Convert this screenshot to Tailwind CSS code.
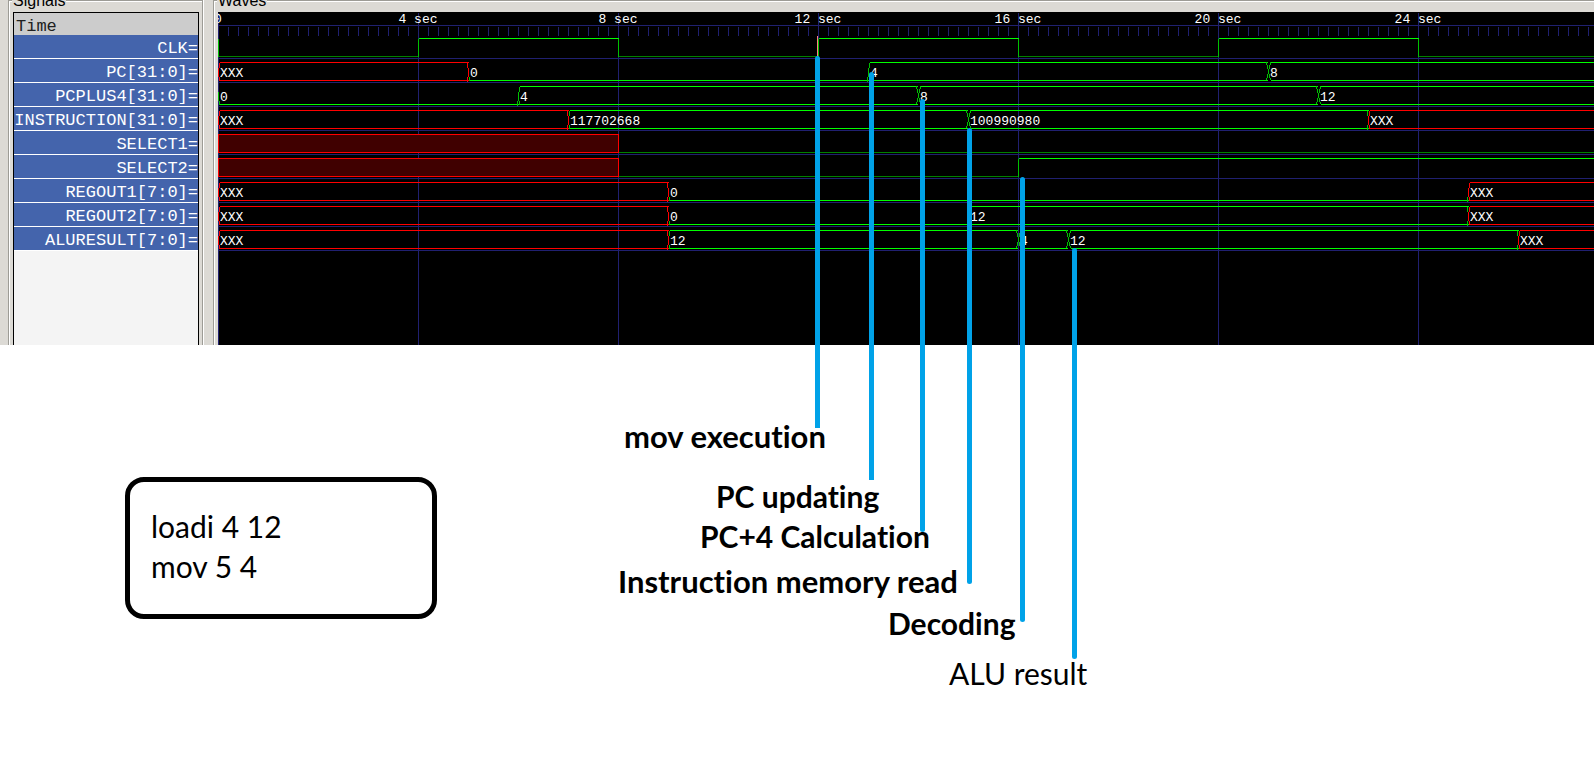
<!DOCTYPE html>
<html lang="en">
<head>
<meta charset="utf-8">
<meta name="viewport" content="width=device-width, initial-scale=1">
<title>Waveform of loadi and mov</title>
<script src="https://cdn.jsdelivr.net/npm/@tailwindcss/browser@4"></script>
</head>
<body class="bg-white text-black">
<div class="relative min-h-screen overflow-hidden">

  <main class="flex h-[345px] gap-[10px] overflow-hidden bg-[#dcdad5] pl-2">
    <section class="relative flex w-[195px] shrink-0 flex-col border border-b-0 border-[#9d9c96] pt-[11px] pr-[3px] pl-[4px] shadow-[inset_1px_1px_0_#fff,1px_0_0_#fff]" aria-labelledby="signals-title">
      <h2 id="signals-title" class="absolute -top-[10px] left-[3px] bg-[#dcdad5] px-px font-['Liberation_Sans',sans-serif] text-[16px] leading-[20px]">Signals</h2>
      <div class="flex flex-1 flex-col overflow-hidden border border-b-0 border-black bg-[#f4f4f4] font-['Liberation_Mono',monospace] text-[17px]">
        <div class="h-[22px] bg-[#cccccc] pl-[2px] leading-[28px] text-[#202020]">Time</div>
        <ul class="text-right whitespace-nowrap text-white">
          <li class="h-6 border-b border-white bg-[#4464ac] leading-[27px]">CLK=</li>
          <li class="h-6 border-b border-white bg-[#4464ac] leading-[27px]">PC[31:0]=</li>
          <li class="h-6 border-b border-white bg-[#4464ac] leading-[27px]">PCPLUS4[31:0]=</li>
          <li class="h-6 border-b border-white bg-[#4464ac] leading-[27px]">INSTRUCTION[31:0]=</li>
          <li class="h-6 border-b border-white bg-[#4464ac] leading-[27px]">SELECT1=</li>
          <li class="h-6 border-b border-white bg-[#4464ac] leading-[27px]">SELECT2=</li>
          <li class="h-6 border-b border-white bg-[#4464ac] leading-[27px]">REGOUT1[7:0]=</li>
          <li class="h-6 border-b border-white bg-[#4464ac] leading-[27px]">REGOUT2[7:0]=</li>
          <li class="h-6 border-b border-white bg-[#4464ac] leading-[27px]">ALURESULT[7:0]=</li>
        </ul>
      </div>
    </section>

    <section class="relative flex min-w-0 flex-1 border-t border-l border-[#9d9c96] pt-[11px] pl-[4px] shadow-[inset_1px_1px_0_#fff]" aria-labelledby="waves-title">
      <h2 id="waves-title" class="absolute -top-[10px] left-[3px] bg-[#dcdad5] px-px font-['Liberation_Sans',sans-serif] text-[16px] leading-[20px]">Waves</h2>
      <svg id="waves" class="block h-full w-full bg-black font-['Liberation_Mono',monospace] text-[13px]" role="img" aria-label="Signal waveforms over time"></svg>
    </section>
  </main>

  <section class="mt-[132px] ml-[125px] h-[142px] w-[312px] rounded-[19px] border-5 border-black px-[21px] py-[24px] font-['Lato',sans-serif] text-[30px] leading-[40px]">
    <p>loadi 4 12</p>
    <p>mov 5 4</p>
  </section>

  <!-- Callout lines from the waveform down to their captions -->
  <div class="absolute top-[56px] left-[815px] h-[372px] w-[5px] rounded-t-full bg-[#00a2e8]"></div>
  <div class="absolute top-[72px] left-[869px] h-[408px] w-[5px] rounded-t-full bg-[#00a2e8]"></div>
  <div class="absolute top-[99px] left-[920px] h-[433px] w-[5px] rounded-full bg-[#00a2e8]"></div>
  <div class="absolute top-[128px] left-[967px] h-[456px] w-[5px] rounded-full bg-[#00a2e8]"></div>
  <div class="absolute top-[177px] left-[1020px] h-[445px] w-[5px] rounded-full bg-[#00a2e8]"></div>
  <div class="absolute top-[248px] left-[1072px] h-[411px] w-[5px] rounded-full bg-[#00a2e8]"></div>

  <div class="font-['Lato',sans-serif] text-[30px] leading-[40px] font-bold whitespace-nowrap [font-variant-ligatures:none]">
    <p class="absolute top-[416px] left-[624px] text-[31px]">mov execution</p>
    <p class="absolute top-[476px] left-[716px]">PC updating</p>
    <p class="absolute top-[516px] left-[700px]">PC+4 Calculation</p>
    <p class="absolute top-[561px] left-[618px] text-[31px]">Instruction memory read</p>
    <p class="absolute top-[603px] left-[888px]">Decoding</p>
    <p class="absolute top-[653px] left-[949px] font-normal">ALU result</p>
  </div>
</div>

<script>
const NS = 'http://www.w3.org/2000/svg';
const svg = document.getElementById('waves');
const SEC = 50, END = 80, FIRST = 23, PITCH = 24, SIDE = 218;
const GRID = '#202070', HI = '#00ff00', LO = '#008000', EDGE = '#00c000', RED = '#ff0000';

function add(tag, attrs, text) {
  const el = document.createElementNS(NS, tag);
  for (const k in attrs) el.setAttribute(k, attrs[k]);
  if (text !== undefined) el.textContent = text;
  svg.appendChild(el);
}
function line(color, ...pts) {
  add('polyline', { points: pts.map(p => (p[0] + 0.5) + ',' + (p[1] + 0.5)).join(' '), fill: 'none', stroke: color, 'shape-rendering': 'crispEdges' });
}
// Labels that would start past the right edge of the window are left out
function label(x, y, text, anchor) {
  if (x > window.innerWidth - SIDE - 8) return;
  add('text', { x, y, fill: '#fff', 'font-size': 13, 'text-anchor': anchor || 'start' }, text);
}

// Single-bit traces: [time, value]
function bit(row, steps) {
  const top = FIRST + row * PITCH + 3, bot = top + 18;
  steps.forEach(([t, v], i) => {
    const x = t * SEC, e = (i + 1 < steps.length ? steps[i + 1][0] : END) * SEC;
    if (v === 'x') {
      add('rect', { x: x + 0.5, y: top + 0.5, width: e - x, height: 18, fill: '#400000', stroke: RED, 'shape-rendering': 'crispEdges' });
      return;
    }
    const y = v ? top : bot;
    line(v ? HI : LO, [x, y], [e, y]);
    if (i === 0 || steps[i - 1][1] !== 'x') line(EDGE, [x, top], [x, bot]);
  });
}

// Bus traces: a zero value is drawn as the lower rail only
function bus(row, steps) {
  const top = FIRST + row * PITCH + 3, bot = top + 18, mid = top + 9;
  const plain = v => v === 'XXX' || v === '0';
  steps.forEach(([t, v], i) => {
    const next = steps[i + 1], prev = steps[i - 1];
    const c = v === 'XXX' ? RED : HI, edge = v === 'XXX' ? RED : EDGE;
    const crossIn = prev && !plain(prev[1]) && !plain(v);
    const crossOut = next && !plain(next[1]) && !plain(v);
    const x = t * SEC, e = (next ? next[0] : END) * SEC;
    const a = x + (crossIn ? 2 : 1), b = e - (crossOut ? 2 : 1);
    line(c, [a, bot], [b + 1, bot]);
    if (v !== '0') line(c, [a, top], [b + 1, top]);
    if (crossIn) {
      line(EDGE, [x - 2, top], [x + 2, bot]);
      line(EDGE, [x - 2, bot], [x + 2, top]);
    } else {
      line(prev && prev[1] === 'XXX' ? RED : edge, [x, mid + 5], [x, mid - 4]);
      line(edge, [a, bot], [a, bot - 4]);
      if (v !== '0') line(edge, [a, top], [a, top + 5]);
    }
    if (next && !crossOut) {
      line(edge, [b, bot + 1], [b, bot - 4]);
      if (v !== '0') line(edge, [b, top], [b, top + 5]);
    }
    label(x + 2, top + 15, v);
  });
}

function draw() {
  svg.replaceChildren();

  // Time ruler and grid
  line(GRID, [0, 13], [END * SEC, 13]);
  for (let x = 10; x < END * SEC; x += 10) line(GRID, [x, 14], [x, 23]);
  for (let t = 0; t < END; t += 4) line(GRID, [t * SEC, 0], [t * SEC, 600]);
  for (let r = 0; r < 9; r++) line(GRID, [0, FIRST + r * PITCH + 23], [END * SEC, FIRST + r * PITCH + 23]);
  for (let t = 0; t < END; t += 4) label(t * SEC, 11, t ? t + ' sec' : '0', 'middle');

  bit(0, [[0, 0], [4, 1], [8, 0], [12, 1], [16, 0], [20, 1], [24, 0]]);
  bus(1, [[0, 'XXX'], [5, '0'], [13, '4'], [21, '8']]);
  bus(2, [[0, '0'], [6, '4'], [14, '8'], [22, '12']]);
  bus(3, [[0, 'XXX'], [7, '117702668'], [15, '100990980'], [23, 'XXX']]);
  bit(4, [[0, 'x'], [8, 0]]);
  bit(5, [[0, 'x'], [8, 0], [16, 1]]);
  bus(6, [[0, 'XXX'], [9, '0'], [25, 'XXX']]);
  bus(7, [[0, 'XXX'], [9, '0'], [15, '12'], [25, 'XXX']]);
  bus(8, [[0, 'XXX'], [9, '12'], [16, '4'], [17, '12'], [26, 'XXX']]);

  // Primary marker
  line('#ff8080', [12 * SEC - 1, 23], [12 * SEC - 1, 45]);
}
draw();
window.addEventListener('resize', draw);
</script>
</body>
</html>
